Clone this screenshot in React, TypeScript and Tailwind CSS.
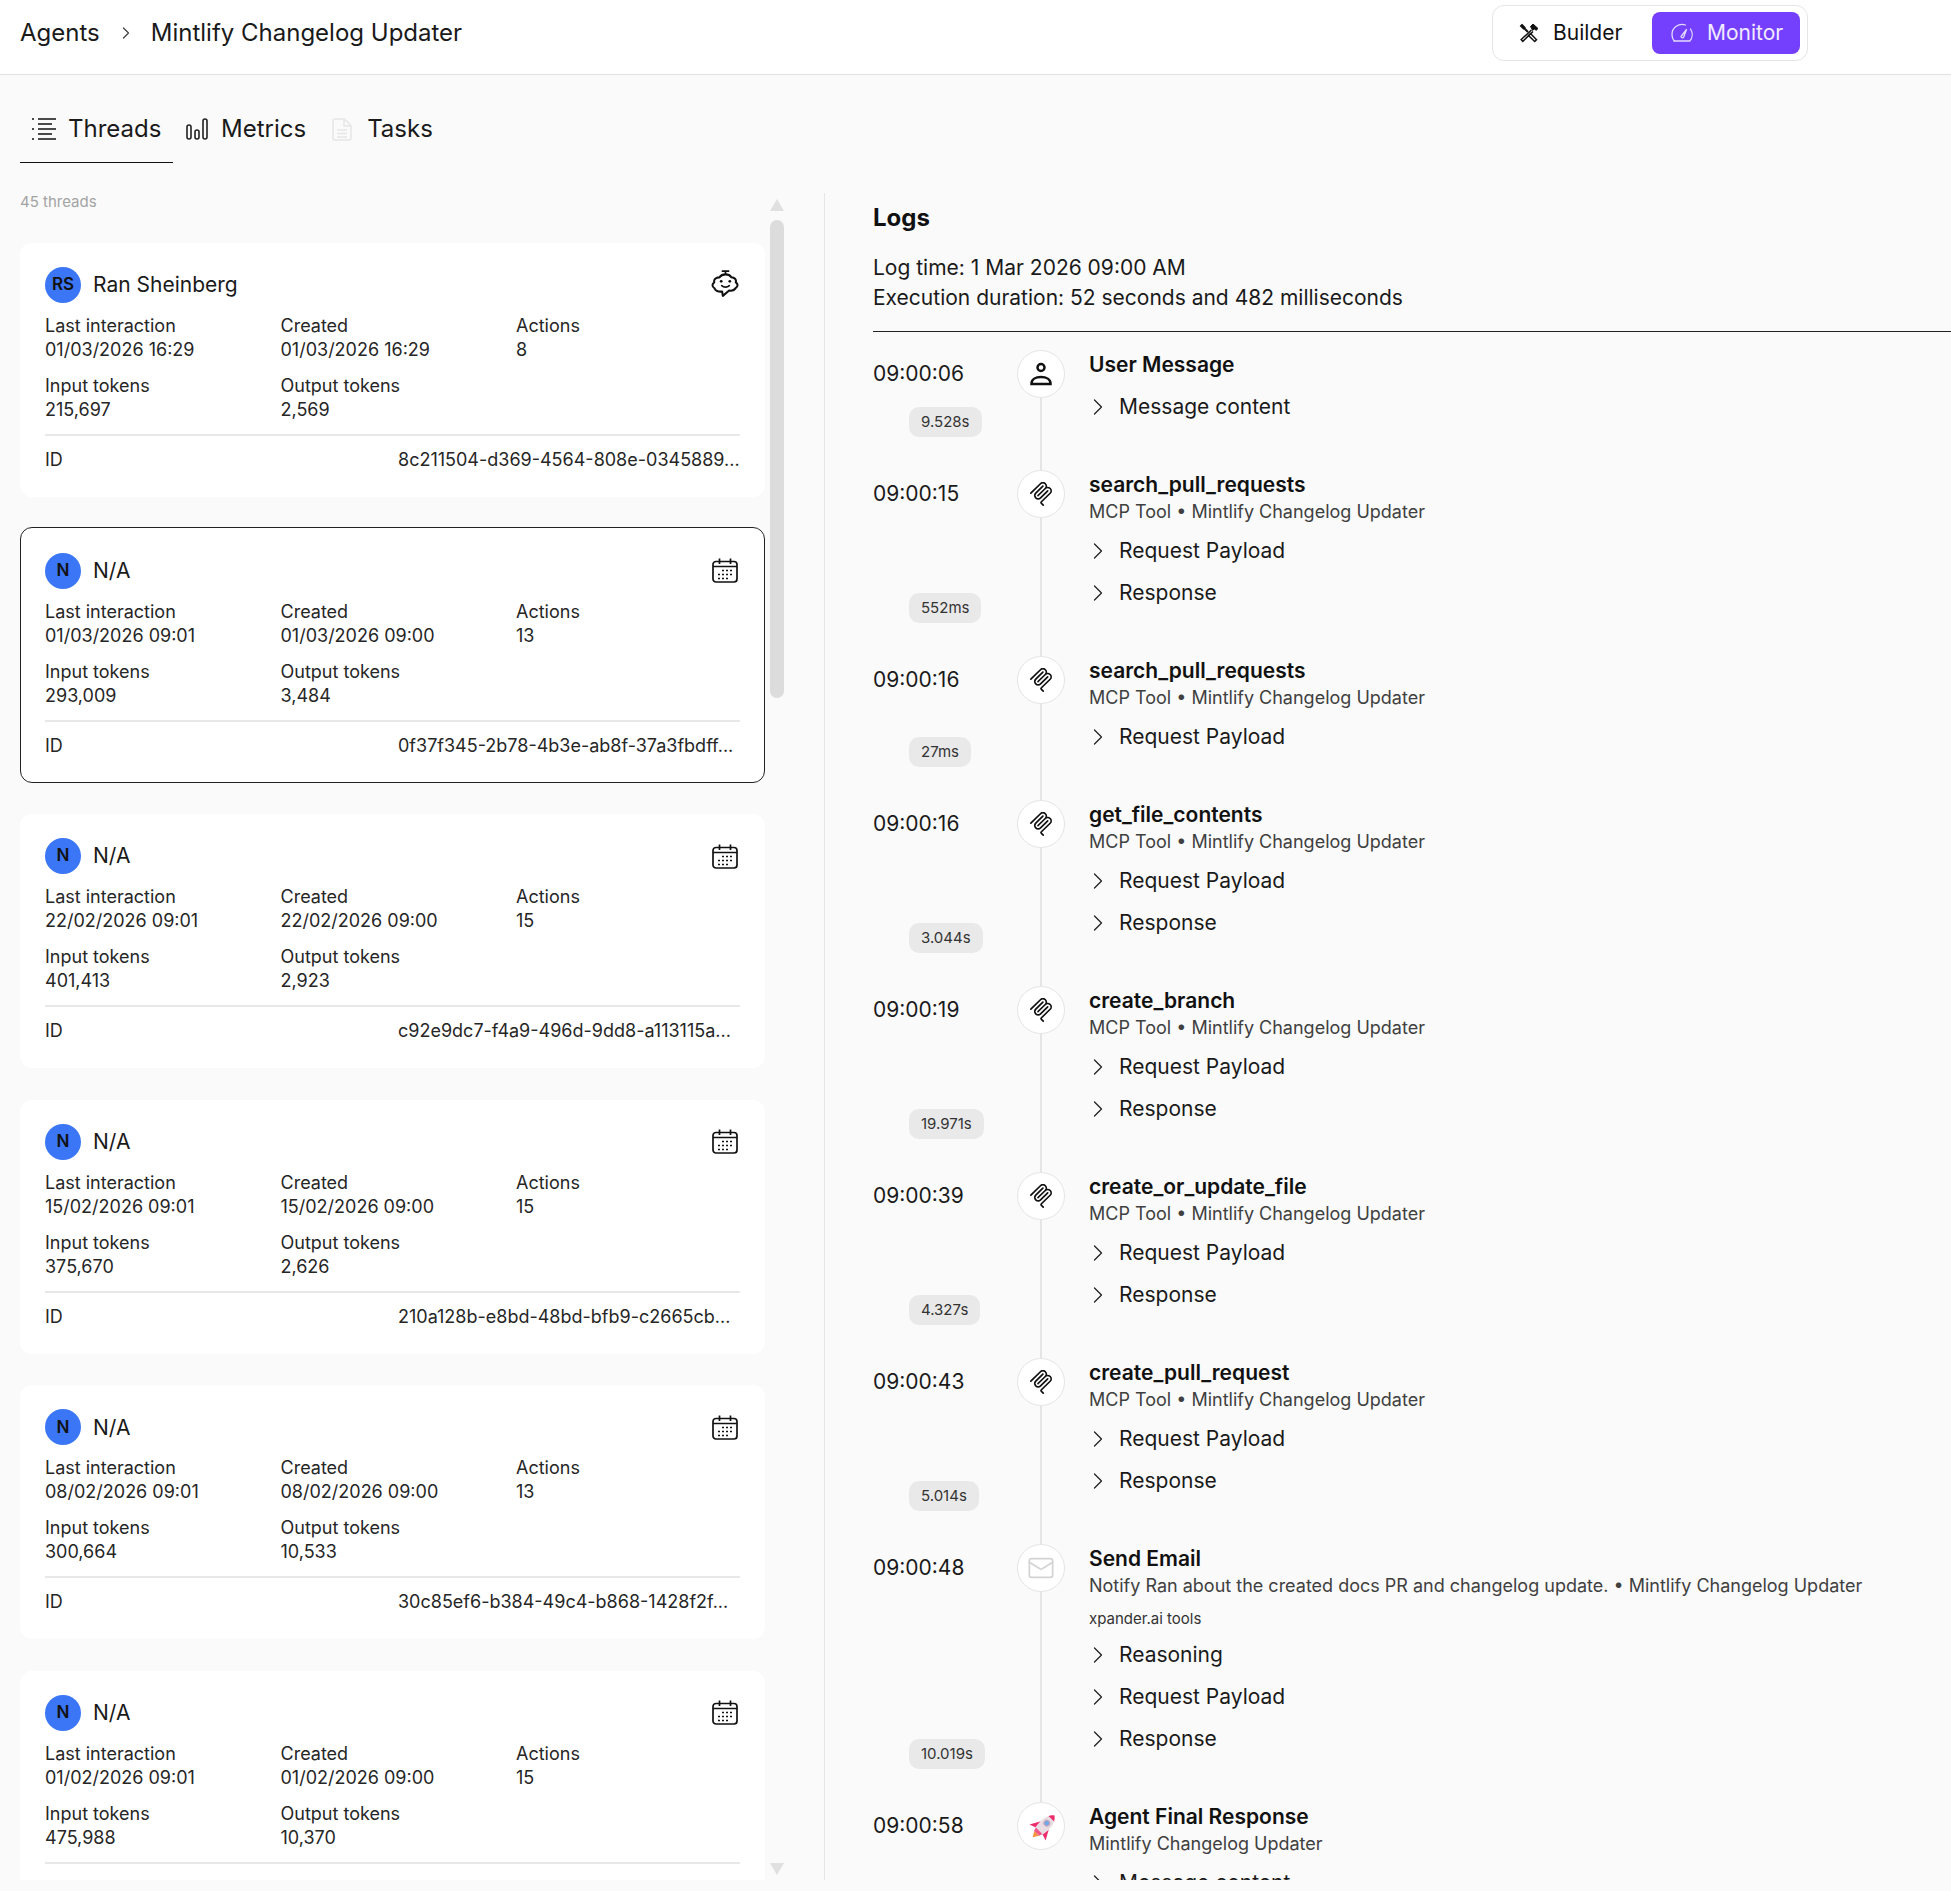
import React from "react";
import { ChevronRight, Mail } from "lucide-react";

const cards = [
  { initials: "RS", name: "Ran Sheinberg", kind: "chat", last: "01/03/2026 16:29", created: "01/03/2026 16:29", actions: "8", input: "215,697", output: "2,569", id: "8c211504-d369-4564-808e-0345889..." },
  { initials: "N", name: "N/A", kind: "calendar", selected: true, last: "01/03/2026 09:01", created: "01/03/2026 09:00", actions: "13", input: "293,009", output: "3,484", id: "0f37f345-2b78-4b3e-ab8f-37a3fbdff..." },
  { initials: "N", name: "N/A", kind: "calendar", last: "22/02/2026 09:01", created: "22/02/2026 09:00", actions: "15", input: "401,413", output: "2,923", id: "c92e9dc7-f4a9-496d-9dd8-a113115a..." },
  { initials: "N", name: "N/A", kind: "calendar", last: "15/02/2026 09:01", created: "15/02/2026 09:00", actions: "15", input: "375,670", output: "2,626", id: "210a128b-e8bd-48bd-bfb9-c2665cb..." },
  { initials: "N", name: "N/A", kind: "calendar", last: "08/02/2026 09:01", created: "08/02/2026 09:00", actions: "13", input: "300,664", output: "10,533", id: "30c85ef6-b384-49c4-b868-1428f2f..." },
  { initials: "N", name: "N/A", kind: "calendar", last: "01/02/2026 09:01", created: "01/02/2026 09:00", actions: "15", input: "475,988", output: "10,370", id: "d5a3c1e2-7b64-4f19-a2d7-90be13c..." },
];

const mcpSub = "MCP Tool • Mintlify Changelog Updater";

const logs = [
  { time: "09:00:06", icon: "user", title: "User Message", items: ["Message content"], badge: "9.528s" },
  { time: "09:00:15", icon: "mcp", title: "search_pull_requests", sub: mcpSub, items: ["Request Payload", "Response"], badge: "552ms" },
  { time: "09:00:16", icon: "mcp", title: "search_pull_requests", sub: mcpSub, items: ["Request Payload"], badge: "27ms" },
  { time: "09:00:16", icon: "mcp", title: "get_file_contents", sub: mcpSub, items: ["Request Payload", "Response"], badge: "3.044s" },
  { time: "09:00:19", icon: "mcp", title: "create_branch", sub: mcpSub, items: ["Request Payload", "Response"], badge: "19.971s" },
  { time: "09:00:39", icon: "mcp", title: "create_or_update_file", sub: mcpSub, items: ["Request Payload", "Response"], badge: "4.327s" },
  { time: "09:00:43", icon: "mcp", title: "create_pull_request", sub: mcpSub, items: ["Request Payload", "Response"], badge: "5.014s" },
  { time: "09:00:48", icon: "mail", title: "Send Email", sub: "Notify Ran about the created docs PR and changelog update. • Mintlify Changelog Updater", tag: "xpander.ai tools", items: ["Reasoning", "Request Payload", "Response"], badge: "10.019s" },
  { time: "09:00:58", icon: "rocket", title: "Agent Final Response", sub: "Mintlify Changelog Updater", items: ["Message content"] },
];

const ThreadsIcon = () => (
  <svg width="24" height="22" viewBox="0 0 24 22" fill="none" stroke="#111" strokeWidth="1.6">
    <path d="M0 1h2M6 1h18M6 6h14M0 11h2M6 11h18M6 16h14M0 21h2M6 21h18" />
  </svg>
);

const MetricsIcon = () => (
  <svg width="22" height="22" viewBox="0 0 22 22" fill="none" stroke="#222" strokeWidth="1.6">
    <rect x="1" y="7" width="4" height="14" rx="2" />
    <rect x="9" y="12" width="4" height="9" rx="2" />
    <rect x="17" y="1" width="4" height="20" rx="2" />
  </svg>
);

const TasksIcon = () => (
  <svg width="20" height="23" viewBox="0 0 20 23" fill="none" stroke="#e6e6e6" strokeWidth="1.5">
    <path d="M2.5 1h10L19 7.5V20a2 2 0 0 1-2 2H3a2 2 0 0 1-2-2V3a2 2 0 0 1 1.5-2z" />
    <path d="M12 1v7h7M5 12h10M5 15.5h10M5 19h10" />
  </svg>
);

const BuilderIcon = () => (
  <svg width="20" height="20" viewBox="0 0 20 20" fill="none" stroke="#111">
    <path d="M3 1.5 6 4.5 4.5 6 1.5 3z" fill="#111" strokeWidth="1.2" />
    <path d="M5 5l4 4" strokeWidth="2" />
    <path d="M11.5 10.5l6 6.2-1.8 1.8-6.2-6z" strokeWidth="1.5" />
    <path d="M11.5 3.5 14 1l5 4.5-1.8 1.8-2-1.4-1.5 1.5z" fill="#111" strokeWidth="1" />
    <path d="M12.5 7 2.2 16.5l1.6 1.8L14 8.5" strokeWidth="1.5" />
  </svg>
);

const GaugeIcon = () => (
  <svg width="22" height="19" viewBox="0 0 22 19" fill="none" stroke="#fff" strokeWidth="1.3" strokeLinecap="round" strokeLinejoin="round" className="opacity-80">
    <path d="M3.2 18A10 10 0 0 1 1 11.5 10 10 0 0 1 14.5 2" />
    <path d="M19.5 6A10 10 0 0 1 18.8 18H3.2" />
    <path d="M10 13.5 15.5 6.5 12.5 14.5a1.6 1.6 0 0 1-2.5-1z" />
  </svg>
);

const ChatBotIcon = () => (
  <svg width="29" height="27" viewBox="0 0 27 25" fill="none" stroke="#111" strokeWidth="1.900" strokeLinejoin="round" className="-mt-[3px] -mr-[2px]">
    <path d="M10 1h7M13.500 1v3" strokeWidth="1.600" />
    <path d="M13.500 4c2.500 0 4.300 1 5.300 2.600 3.200.2 5 2.200 4.300 4.800 2.200 1.400 2.200 4-.2 5.400-1.200 2-3.300 2.700-6 2.200L11 24l-.6-4c-3.300.3-6-.6-7.100-3-2.500-1.400-2.500-4.200-.3-5.600C2.400 8.700 4.500 6.800 7.800 6.800 9 5 11 4 13.500 4z" />
    <circle cx="9.500" cy="10.500" r="1.300" fill="#111" stroke="none" />
    <circle cx="17.500" cy="10.500" r="1.300" fill="#111" stroke="none" />
    <path d="M10 14.500c1.800 1.800 5.200 1.800 7 0" strokeWidth="1.500" strokeLinecap="round" />
  </svg>
);

const CalendarIcon = () => (
  <svg width="26" height="25" viewBox="0 0 26 25" fill="none" stroke="#111" strokeWidth="1.700">
    <rect x="1" y="3.500" width="24" height="20.500" rx="3" />
    <path d="M1 8.500h24M7.500 0.500v5.500M18.500 0.500v5.500" />
    <path d="M10 12.500h2M14 12.500h2M18 12.500h2M6 16.500h2M10 16.500h2M14 16.500h2M18 16.500h2M6 20.500h2M10 20.500h2M14 20.500h2" strokeWidth="1.600" />
  </svg>
);

const UserIcon = () => (
  <svg width="24" height="24" viewBox="0 0 24 24" fill="none" stroke="#111" strokeWidth="2.500">
    <circle cx="12" cy="5.500" r="3.500" />
    <path d="M2.500 22v-.5c0-4 4-6.500 9.500-6.500s9.500 2.500 9.500 6.500v.5z" />
  </svg>
);

const McpIcon = () => (
  <svg width="24" height="24" viewBox="0 0 24 24" fill="#111">
    <path d="M15.688 2.343a2.588 2.588 0 00-3.61 0l-9.626 9.44a.863.863 0 01-1.203 0 .823.823 0 010-1.18l9.626-9.44a4.313 4.313 0 016.016 0 4.116 4.116 0 011.204 3.54 4.3 4.3 0 013.609 1.18l.05.05a4.115 4.115 0 010 5.9l-8.706 8.537a.274.274 0 000 .393l1.788 1.754a.823.823 0 010 1.18.863.863 0 01-1.203 0l-1.788-1.753a1.92 1.92 0 010-2.754l8.706-8.538a2.47 2.47 0 000-3.54l-.05-.049a2.588 2.588 0 00-3.607-.003l-7.172 7.034-.002.002-.098.097a.863.863 0 01-1.204 0 .823.823 0 010-1.18l7.273-7.133a2.47 2.47 0 00-.003-3.537z" />
    <path d="M14.485 4.703a.823.823 0 000-1.18.863.863 0 00-1.204 0l-7.119 6.982a4.115 4.115 0 000 5.9 4.314 4.314 0 006.016 0l7.12-6.982a.823.823 0 000-1.18.863.863 0 00-1.204 0l-7.119 6.982a2.588 2.588 0 01-3.61 0 2.47 2.47 0 010-3.54l7.12-6.982z" />
  </svg>
);

const RocketIcon = () => (
  <svg width="32" height="32" viewBox="0 0 28 28" className="ml-[6px]">
    <g transform="rotate(45 14 14)">
      <path d="M11 23h6l-3 5z" fill="#f4943f" />
      <path d="M9 13 4 22l6-2zM19 13l5 9-6-2z" fill="#ec2f6c" />
      <path d="M14 1c5 4 6 10 4.500 19h-9C8 11 9 5 14 1z" fill="#e9dde4" />
      <path d="M14 1c1.500 1.200 2.700 2.500 3.500 4h-7c.8-1.500 2-2.800 3.500-4z" fill="#ec2f6c" />
      <path d="M10 20h8l-.8 3h-6.400z" fill="#f0558a" />
      <circle cx="14" cy="10.500" r="2.500" fill="#6ea8e8" stroke="#c9a6b8" />
    </g>
  </svg>
);

const LogIcon = ({ name }: { name: string }) => {
  if (name === "user") return <UserIcon />;
  if (name === "mcp") return <McpIcon />;
  if (name === "mail") return <Mail size={28} strokeWidth={1.5} color="#d4d4d4" />;
  return <RocketIcon />;
};

const Field = ({ label, value }: { label: string; value: string }) => (
  <div className="text-[18px] leading-6 text-[#262626]">
    <div>{label}</div>
    <div>{value}</div>
  </div>
);

const ThreadCard = ({ card }: { card: (typeof cards)[number] }) => (
  <div className={card.selected ? "shrink-0 h-[256px] -mt-[2px] rounded-xl bg-white border border-[#222] px-[24px] pt-[25px]" : "shrink-0 h-[254px] rounded-xl bg-white px-[25px] pt-[24px]"}>
    <div className="flex items-center h-9">
      <div className="w-9 h-9 rounded-full bg-[#3b76f6] flex items-center justify-center text-[17px] font-semibold text-[#111]">{card.initials}</div>
      <div className="ml-3 text-[21px] text-[#1a1a1a]">{card.name}</div>
      <div className="ml-auto mr-[2px] flex items-center">{card.kind === "chat" ? <ChatBotIcon /> : <CalendarIcon />}</div>
    </div>
    <div className="grid grid-cols-[235.5px_235.5px_1fr] mt-[11px] gap-y-3">
      <Field label="Last interaction" value={card.last} />
      <Field label="Created" value={card.created} />
      <Field label="Actions" value={card.actions} />
      <Field label="Input tokens" value={card.input} />
      <Field label="Output tokens" value={card.output} />
    </div>
    <div className="mt-3 border-t-2 border-[#e8e8e8] pt-3 flex text-[18px] leading-6 text-[#262626]">
      <div className="w-[353px]">ID</div>
      <div className="whitespace-nowrap">{card.id}</div>
    </div>
  </div>
);

const LogRow = ({ log, last }: { log: (typeof logs)[number]; last: boolean }) => (
  <div className="flex shrink-0">
    <div className="w-[144px] flex flex-col justify-between pb-[33px]">
      <div className="h-12 flex items-center text-[21px] text-[#1a1a1a]">{log.time}</div>
      {log.badge && (
        <div className="self-start ml-9 h-[30px] px-3 rounded-[10px] bg-[#e9e9e9] flex items-center text-[15px] text-[#333]">{log.badge}</div>
      )}
    </div>
    <div className="w-12 flex flex-col items-center">
      <div className="w-12 h-12 shrink-0 rounded-full border border-[#e5e5e5] bg-white flex items-center justify-center">
        <LogIcon name={log.icon} />
      </div>
      {!last && <div className="w-[2px] flex-1 bg-[#e5e5e5]" />}
    </div>
    <div className="ml-6 pt-[1px] pb-[42px] flex-1">
      <div className="h-7 flex items-center text-[21px] font-semibold text-[#111]">{log.title}</div>
      {log.sub ? (
        <div className="h-6 flex items-center text-[18px] text-[#404040] mb-[7px]">{log.sub}</div>
      ) : (
        <div className="h-[7px]" />
      )}
      {log.tag && <div className="h-6 mt-[10px] mb-[3px] flex items-center text-[15px] text-[#333]">{log.tag}</div>}
      {log.items.map((item) => (
        <div key={item} className="h-[42px] flex items-center text-[21px] text-[#1a1a1a]">
          <ChevronRight size={28} strokeWidth={1.1} className="ml-[-5px] text-[#222]" />
          <span className="ml-[7px]">{item}</span>
        </div>
      ))}
    </div>
  </div>
);

export default function App() {
  return (
    <div className="h-[1891px] overflow-hidden bg-[#fafafa] flex flex-col font-['Inter',sans-serif] text-[#111]">
      <header className="h-[75px] shrink-0 bg-white border-b border-[#e2e2e2] flex items-center pl-5">
        <div className="flex items-center -mt-[9px] text-[24px] text-[#1a1a1a]">
          <span>Agents</span>
          <ChevronRight size={20} strokeWidth={1.5} className="ml-[16px] mr-[15px] text-[#444]" />
          <span>Mintlify Changelog Updater</span>
        </div>
        <div className="ml-auto mr-[143px] -mt-[9px] w-[316px] h-[56px] rounded-xl border border-[#e5e5e5] bg-white flex items-center pl-[26px] pr-[7px]">
          <BuilderIcon />
          <span className="ml-[14px] text-[21px] text-[#111]">Builder</span>
          <div className="ml-auto w-[148px] h-[42px] rounded-lg bg-[#7540fd] flex items-center pl-[19px] text-white">
            <GaugeIcon />
            <span className="ml-[14px] text-[21px] text-white/90">Monitor</span>
          </div>
        </div>
      </header>
      <main className="flex-1 min-h-0 flex pb-[11px]">
        <section className="w-[824px] shrink-0 flex flex-col pl-5">
          <nav className="h-[88px] shrink-0 flex items-start pt-[36px] text-[24px] text-[#1a1a1a]">
            <div className="w-[153px] h-[52px] border-b-[1.500px] border-[#111] flex items-start pl-3">
              <div className="h-9 flex items-center gap-[12px]"><ThreadsIcon /><span>Threads</span></div>
            </div>
            <div className="h-9 flex items-center ml-[13px]"><MetricsIcon /><span className="ml-[13px]">Metrics</span></div>
            <div className="h-9 flex items-center ml-[26px]"><TasksIcon /><span className="ml-[15px]">Tasks</span></div>
          </nav>
          <div className="flex-1 min-h-0 flex overflow-hidden mt-[27px]">
            <div className="w-[745px] shrink-0 flex flex-col gap-[31.600px]">
              <div className="h-6 shrink-0 -mb-[2.600px] flex items-center text-[15px] text-[#a3a3a3]">45 threads</div>
              {cards.map((card, i) => (
                <ThreadCard key={i} card={card} />
              ))}
            </div>
            <div className="ml-[5px] w-[14px] flex flex-col items-center pt-[9px] pb-[5px]">
              <div className="w-0 h-0 border-x-[7px] border-x-transparent border-b-[12px] border-b-[#e0e0e0]" />
              <div className="w-[14px] h-[478px] mt-[9px] rounded-full bg-[#dcdcdc]" />
              <div className="mt-auto w-0 h-0 border-x-[7px] border-x-transparent border-t-[12px] border-t-[#e0e0e0]" />
            </div>
          </div>
        </section>
        <section className="flex-1 min-w-0 mt-[118px] border-l border-[#e5e5e5] pl-12 pt-[9px] overflow-hidden flex flex-col">
          <h2 className="h-8 flex items-center text-[24px] font-bold text-[#111]">Logs</h2>
          <div className="mt-[19px] text-[21px] leading-[30px] text-[#1a1a1a]">
            <div>Log time: 1 Mar 2026 09:00 AM</div>
            <div>Execution duration: 52 seconds and 482 milliseconds</div>
          </div>
          <div className="mt-[18px] border-t border-[#222] mb-[18px]" />
          {logs.map((log, i) => (
            <LogRow key={i} log={log} last={i === logs.length - 1} />
          ))}
        </section>
      </main>
    </div>
  );
}
